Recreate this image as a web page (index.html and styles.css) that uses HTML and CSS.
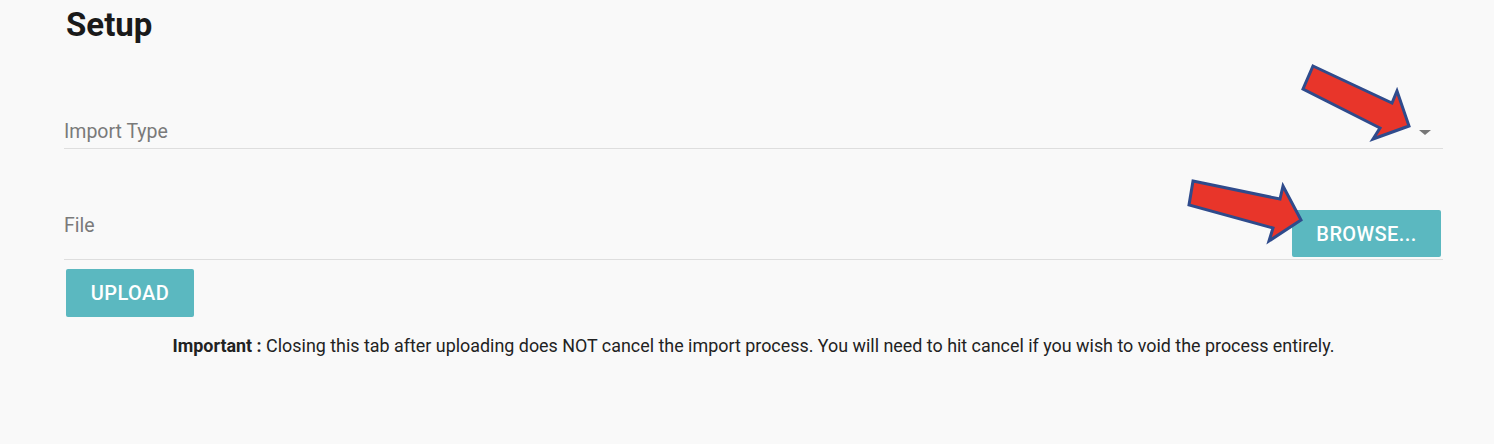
FILE: index.html
```html
<!DOCTYPE html>
<html lang="en">
<head>
<meta charset="utf-8">
<title>Setup</title>
<link rel="stylesheet" href="styles.css">
</head>
<body>
<div class="page">
  <h1 class="title">Setup</h1>
  <div class="field select-field">
    <span class="label">Import Type</span>
    <span class="caret"></span>
  </div>
  <div class="field file-field">
    <span class="label file-label">File</span>
    <button class="btn browse">BROWSE...</button>
  </div>
  <button class="btn upload">UPLOAD</button>
  <p class="note"><strong>Important :</strong> Closing this tab after uploading does NOT cancel the import process. You will need to hit cancel if you wish to void the process entirely.</p>
</div>
<svg class="arrows" width="1494" height="444" viewBox="0 0 1494 444" xmlns="http://www.w3.org/2000/svg">
  <polygon points="1313,66 1392,103 1397,91 1409,126 1373,139 1380,128 1303,89" fill="#e8352a" stroke="#2f4b8c" stroke-width="3" stroke-linejoin="miter"/>
  <polygon points="1193,181 1280,199 1283,186 1301,220 1269,241 1273,228 1189,205" fill="#e8352a" stroke="#2f4b8c" stroke-width="3" stroke-linejoin="miter"/>
</svg>
</body>
</html>
```
FILE: styles.css
```css
html, body {
  margin: 0;
  padding: 0;
  background: #f9f9f9;
}
body {
  font-family: Roboto, "Liberation Sans", Arial, sans-serif;
  color: #212121;
  width: 1494px;
  height: 444px;
  overflow: hidden;
  position: relative;
}
.page {
  padding: 0 51px 0 64px;
  display: flex;
  flex-direction: column;
}
.title {
  margin: 0;
  padding: 6px 0 0 2px;
  font-size: 33px;
  line-height: 38px;
  font-weight: 700;
  color: #1a1a1a;
}
.field {
  display: flex;
  justify-content: space-between;
  border-bottom: 1px solid #dedede;
}
.label {
  font-size: 19.5px;
  line-height: 23px;
  color: #7a7a7a;
}
.select-field {
  margin-top: 76px;
  padding-bottom: 5px;
  align-items: flex-start;
}
.caret {
  width: 0;
  height: 0;
  border-left: 6px solid transparent;
  border-right: 6px solid transparent;
  border-top: 5px solid #777;
  margin-top: 10px;
  margin-right: 12px;
}
.file-field {
  margin-top: 61px;
  align-items: flex-start;
}
.file-label {
  margin-top: 4px;
}
.btn {
  font-family: Roboto, "Liberation Sans", Arial, sans-serif;
  font-size: 20px;
  font-weight: 500;
  color: #ffffff;
  background: #5bb8c0;
  border: none;
  border-radius: 2px;
  padding: 0;
  text-align: center;
  letter-spacing: 0.4px;
}
.browse {
  width: 149px;
  height: 47px;
  margin: 0 2px 2px 0;
}
.upload {
  align-self: flex-start;
  width: 128px;
  height: 48px;
  margin: 9px 0 0 2px;
}
.note {
  margin: 18px 0 0 0;
  font-size: 17.9px;
  line-height: 22px;
  text-align: center;
  color: #222;
}
.note strong {
  font-weight: 700;
}
.arrows {
  position: absolute;
  top: 0;
  left: 0;
  pointer-events: none;
}
```
